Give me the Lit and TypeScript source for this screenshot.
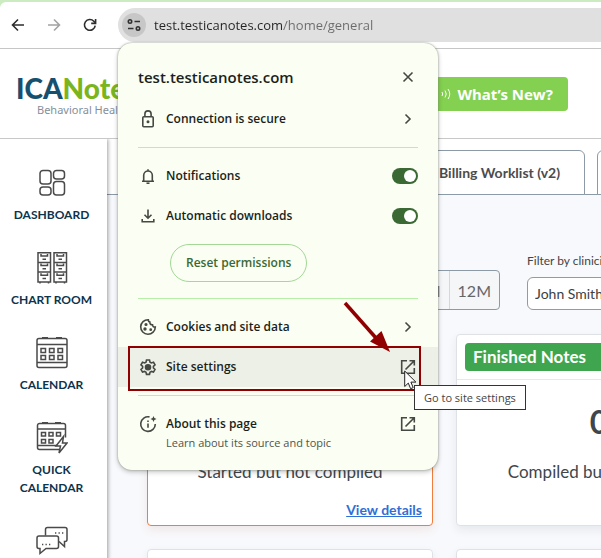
import { LitElement, html, css, svg } from "lit";
import { customElement, state } from "lit/decorators.js";

const icons = {
  back: svg`<path d="M14 8H3M8 2.500 2.500 8 8 13.500" />`,
  reload: svg`<path d="M13.200 8.600A5.400 5.400 0 1 1 11.800 4.200L13.500 6" /><path d="M13.600 2v4.400H9.200" />`,
  tune: svg`<circle cx="4" cy="4.500" r="1.700" /><path d="M8.500 4.500h5.500M2 11.500h5.500" /><circle cx="12" cy="11.500" r="1.700" />`,
  lock: svg`<rect x="4.800" y="7.800" width="10.400" height="9.900" rx="1" /><path d="M6.900 7.500V5a3.100 3.100 0 0 1 6.200 0v2.500" /><circle cx="10" cy="12.700" r=".7" fill="currentColor" />`,
  bell: svg`<path d="M4 15.200h12M5.700 15V9.300a4.300 4.300 0 0 1 8.600 0V15M10 4.700V3.200" /><path d="M8.500 17.200h3" />`,
  download: svg`<path d="M10 3.500v8.300M6.500 8.700 10 12.200l3.500-3.500M4.200 13v2.800h11.600V13" />`,
  cookie: svg`<path d="M10.300 2.700A7.300 7.300 0 1 0 17.300 10c-1.700.2-2.800-.7-2.800-2.200-1.900.1-2.800-1-2.600-2.700-1.200-.3-1.700-1.200-1.600-2.400Z" /><circle cx="8" cy="7.500" r=".8" fill="currentColor" /><circle cx="7" cy="12" r=".9" fill="currentColor" /><circle cx="12.700" cy="12.700" r=".6" fill="currentColor" />`,
  gear: svg`<path d="M8.500 3h3l.5 2.200 1.400.8 2.100-.7 1.500 2.600-1.600 1.500v1.600l1.600 1.500-1.500 2.600-2.100-.7-1.400.8-.5 2.200h-3L8 15.200l-1.400-.8-2.100.7L3 12.500 4.600 11V9.400L3 7.900l1.500-2.600 2.100.7L8 5.200Z" /><circle cx="10" cy="10.200" r="2.500" fill="currentColor" />`,
  info: svg`<path d="M11.500 2.900A7.300 7.300 0 1 0 17.300 10" /><path d="M10 9.500v4.300M10 6.500v1.400" /><path d="m15.500 2 .9 2.100 2.100.9-2.100.9-.9 2.100-.9-2.100-2.100-.9 2.100-.9Z" fill="currentColor" stroke="none" />`,
  open: svg`<path d="M9 3.700H3.700v12.600h12.600V11M11.500 3.700h4.800v4.800M16 4 7.500 12.500" />`,
  chevron: svg`<path d="m7.500 5.500 4.500 4.500-4.500 4.500" />`,
  close: svg`<path d="m5.500 5.500 9 9m0-9-9 9" />`,
  dashboard: svg`<rect x="4" y="3.500" width="11" height="13.500" rx="3" /><rect x="17.500" y="3.500" width="11" height="8.500" rx="3" /><rect x="4" y="20" width="11" height="8" rx="3" /><rect x="17.500" y="14.500" width="11" height="13.500" rx="3" />`,
  cabinet: svg`${[2, 18].map(
    (x) => svg`<path d="M${x} .8h12.500v29.200h-12.500zM${x} 10.400h12.500M${x} 20h12.500M${x + 2} 30v1.500M${x + 10.5} 30v1.500" />${[0, 9.6, 19.2].map(
      (y) => svg`<path d="M${x + 3} ${2 + y}v2h6.500v-2M${x + 4.5} ${7.2 + y}h3.500" />`,
    )}`,
  )}`,
  calendar: svg`<rect x="1" y="1.500" width="30" height="29" rx="2" /><path d="M1 7.500h30M1 25.500h30M6 .7h6M20 .7h6" />${[5, 13.5, 22].map(
    (x) => svg`<rect x="${x}" y="11.500" width="4.500" height="4" /><rect x="${x}" y="18.500" width="4.500" height="4" />`,
  )}`,
  quick: svg`<path d="M24 27.500H3.500a2 2 0 0 1-2-2v-22a2 2 0 0 1 2-2h24a2 2 0 0 1 2 2v12M1.500 7h28M1.500 23.500h20M6 .7h6M19 .7h6" />${[5.5, 13, 20.5].map(
    (x) => svg`<rect x="${x}" y="10.500" width="4" height="3.500" />`,
  )}<rect x="5.500" y="17.500" width="4" height="3.500" /><rect x="13" y="17.500" width="4" height="3.500" /><path d="M27.500 14.500 20 24h4.500l-1.500 7 8-10h-4.500Z" fill="#fff" />`,
  chat: svg`<path d="M9.500 10.500v-6a2 2 0 0 1 2-2H29a2 2 0 0 1 2 2v10a2 2 0 0 1-2 2h-.5v5l-5.500-5" /><path d="M3 11h17.500a2 2 0 0 1 2 2v8.500a2 2 0 0 1-2 2H10l-6 5v-5H3a2 2 0 0 1-2-2V13a2 2 0 0 1 2-2Z" /><path d="M6 19.500h1.300M9.500 19.500h1.300M13 19.500h1.300M19 8h1.300M22.500 8h1.300M26 8h1.300" />`,
};

const icon = (name: keyof typeof icons, size = 20) =>
  html`<svg class="icon i${size}" viewBox="0 0 ${size} ${size}" aria-hidden="true">${icons[name]}</svg>`;

@customElement("browser-toolbar")
export class BrowserToolbar extends LitElement {
  static styles = css`
    :host { display: flex; align-items: center; gap: 20px; padding: 6px 0 6px 10px; background: #fff; border-bottom: 1px solid #c6c6c6; border-top-left-radius: 6px; }
    .icon { display: block; fill: none; stroke: currentColor; stroke-width: 1.6; flex: none; }
    .i16 { width: 16px; height: 16px; }
    .nav { border: 0; background: none; padding: 0; color: #2d2d2d; }
    .nav:disabled { color: #a3a3a3; }
    .forward .icon { transform: scaleX(-1); }
    .address { flex: 1; display: flex; align-items: center; gap: 8px; height: 34px; padding-left: 4px; background: #e0e0e0; border-radius: 17px 0 0 17px; }
    .site { width: 24px; height: 24px; border: 0; border-radius: 50%; padding: 4px; background: #c7c7c7; color: #303030; }
    .url { flex: 1; min-width: 0; border: 0; padding: 0; height: 24px; font: 13px "Open Sans", sans-serif; color: transparent; background: linear-gradient(90deg, #242424 129px, #6b6b6b 129px); -webkit-background-clip: text; background-clip: text; outline: 0; }
  `;
  render() {
    return html`
      <button class="nav" aria-label="Back">${icon("back", 16)}</button>
      <button class="nav forward" aria-label="Forward" disabled>${icon("back", 16)}</button>
      <button class="nav" aria-label="Reload">${icon("reload", 16)}</button>
      <div class="address">
        <button class="site" aria-label="View site information">${icon("tune", 16)}</button>
        <input class="url" aria-label="Address" .value=${"test.testicanotes.com/home/general"} />
      </div>
    `;
  }
}

@customElement("site-info")
export class SiteInfo extends LitElement {
  @state() private permissions = [
    { icon: "bell" as const, label: "Notifications", on: true },
    { icon: "download" as const, label: "Automatic downloads", on: true },
  ];
  static styles = css`
    :host { display: block; background: #fafef3; border-radius: 14px; box-shadow: 0 0 2px #8b9282, 0 2px 5px #0000003d; font: 600 12px/20px "Open Sans", sans-serif; color: #1c1e1a; }
    .icon { display: block; width: 20px; height: 20px; fill: none; stroke: currentColor; stroke-width: 1.6; flex: none; color: #454943; }
    .head { display: flex; align-items: center; justify-content: space-between; height: 44px; padding: 12px 20px 0; }
    h2 { margin: 0; font-size: 15px; font-weight: 600; }
    button { font: inherit; color: inherit; }
    .close { border: 0; padding: 0; background: none; }
    .row { box-sizing: border-box; width: 100%; min-height: 40px; display: flex; align-items: center; gap: 8px; padding: 0 20px; border: 0; background: none; text-align: left; }
    .text { flex: 1; }
    .active { background: #edf0e6; }
    .line { height: 1px; margin: 8px 20px; border: 0; background: #b6efa7; }
    .switch { appearance: none; box-sizing: border-box; margin: 0; width: 26px; height: 16px; padding: 2px; border-radius: 8px; background: #969c92; }
    .switch::before { content: ""; display: block; width: 12px; height: 12px; border-radius: 50%; background: #fff; }
    .switch:checked { background: #3b6933; }
    .switch:checked::before { margin-left: 10px; }
    .reset { display: block; height: 38px; margin: 8px 52px 16px; padding: 0 15px; border: 1px solid #a3d896; border-radius: 19px; background: none; color: #3b6933; }
    .about { padding-top: 10px; padding-bottom: 18px; align-items: flex-start; }
    .sub { display: block; font-size: 11px; font-weight: 400; line-height: 18px; color: #50544c; }
  `;
  private toggle(index: number) {
    this.permissions = this.permissions.map((p, i) => (i === index ? { ...p, on: !p.on } : p));
  }
  render() {
    return html`
      <header class="head">
        <h2>test.testicanotes.com</h2>
        <button class="close" aria-label="Close">${icon("close")}</button>
      </header>
      <button class="row">${icon("lock")}<span class="text">Connection is secure</span>${icon("chevron")}</button>
      <hr class="line" />
      ${this.permissions.map(
        (p, i) => html`<label class="row">${icon(p.icon)}<span class="text">${p.label}</span><input class="switch" type="checkbox" .checked=${p.on} @change=${() => this.toggle(i)} /></label>`,
      )}
      <button class="reset">Reset permissions</button>
      <hr class="line" />
      <button class="row">${icon("cookie")}<span class="text">Cookies and site data</span>${icon("chevron")}</button>
      <button class="row active">${icon("gear")}<span class="text">Site settings</span>${icon("open")}</button>
      <hr class="line" />
      <button class="row about">${icon("info")}<span class="text">About this page<span class="sub">Learn about its source and topic</span></span>${icon("open")}</button>
    `;
  }
}

@customElement("side-nav")
export class SideNav extends LitElement {
  private items = [
    { icon: "dashboard" as const, label: "DASHBOARD" },
    { icon: "cabinet" as const, label: "CHART ROOM" },
    { icon: "calendar" as const, label: "CALENDAR" },
    { icon: "quick" as const, label: "QUICK CALENDAR" },
    { icon: "chat" as const, label: "" },
  ];
  static styles = css`
    :host { display: flex; flex-direction: column; gap: 28px; padding: 28px 4px 0 0; background: #fff; box-shadow: 1px 0 4px #00000060; clip-path: inset(0 -8px 0 0); }
    .item { display: flex; flex-direction: column; align-items: center; gap: 7px; padding: 0 8px; font: 700 12px/18px Lato, sans-serif; color: #0c344c; text-align: center; text-decoration: none; }
    .icon { display: block; width: 32px; height: 32px; fill: none; stroke: #4a4a4a; stroke-width: 1.5; }
  `;
  render() {
    return this.items.map((i) => html`<a class="item" href="#" aria-label=${i.label || "Messages"}>${icon(i.icon, 32)}<span>${i.label}</span></a>`);
  }
}

@customElement("app-root")
export class AppRoot extends LitElement {
  static styles = css`
    :host { display: flex; flex-direction: column; position: relative; height: 100vh; box-sizing: border-box; padding-top: 2px; overflow: hidden; background: #cdebc0; font-family: Lato, sans-serif; color: #40464c; }
    button { font: inherit; color: inherit; }
    .top { display: flex; align-items: center; justify-content: space-between; height: 89px; flex: none; padding: 0 33px 0 16px; background: #fff; border-bottom: 1px solid #c8c8c8; }
    .logo { display: flex; flex-direction: column; padding-top: 2px; color: #17506e; font: 900 28px/30px Lato, sans-serif; }
    .logo b { font-weight: 900; color: #7ab51d; }
    .logo small { padding-left: 21px; font: 11px/14px "Noto Sans", sans-serif; color: #85909a; }
    .news { display: flex; align-items: center; gap: 6px; height: 34px; padding: 0 15px; border: 0; border-radius: 4px; background: #84d050; color: #fff; font: 700 15px "Noto Sans", sans-serif; }
    .wave { width: 12px; height: 12px; fill: none; stroke: #fff; }
    .body { flex: 1; min-height: 0; display: grid; grid-template-columns: 107px minmax(0, 1fr); background: #f8f9fc; }
    .side { z-index: 1; }
    .tabs { display: flex; align-items: flex-end; gap: 12px; height: 55px; padding-left: 307px; background: #fff; border-bottom: 1px solid #8c99a6; }
    .tab { flex: none; box-sizing: border-box; height: 45px; min-width: 170px; margin-bottom: -1px; padding: 0 24px; border: 1px solid #8c99a6; border-radius: 6px 6px 0 0; background: #fff; font-size: 14px; font-weight: 700; color: #4c4c4c; white-space: nowrap; }
    .content { padding: 56px 40px 0; }
    .filters { display: flex; justify-content: flex-end; align-items: flex-end; gap: 27px; margin-right: -136px; }
    .range { display: flex; border: 1px solid #8c99a6; border-radius: 4px; overflow: hidden; background: #f5f6f8; }
    .range button { height: 38px; padding: 0 8px; border: 0; border-left: 1px solid #d4d8dd; background: none; font-size: 16px; color: #666; }
    .field { display: flex; flex-direction: column; gap: 6px; width: 170px; font-size: 12px; line-height: 20px; color: #444; }
    .pick { appearance: none; height: 33px; border: 1px solid #999; border-radius: 6px; padding: 0 7px; background: #fff; font: 14px Lato, sans-serif; color: #404040; }
    .cards { display: grid; grid-template-columns: repeat(2, minmax(286px, 1fr)); gap: 23px; margin-top: 24px; }
    .card { display: flex; flex-direction: column; box-sizing: border-box; height: 192px; border: 1px solid #dee2e6; border-radius: 4px; background: #fff; box-shadow: 0 4px 10px #00205014; text-align: center; }
    .next { height: 60px; }
    .orange { border-color: #ee7d3e; box-shadow: 0 4px 10px #a0401018; }
    .cap { height: 28px; padding: 8px; border-bottom: 1px solid #e6e8eb; }
    .chip { display: block; padding: 0 8px; border-radius: 4px; background: #3fa64f; color: #fff; font-size: 17px; font-weight: 700; line-height: 28px; text-align: left; }
    .count { margin-top: 24px; font-size: 32px; font-weight: 700; line-height: 36px; }
    .note { margin-top: 20px; font-size: 17px; line-height: 24px; white-space: nowrap; }
    .orange .note { margin-top: 125px; }
    .view { margin: 15px 10px 0; font-size: 14px; font-weight: 700; line-height: 22px; text-align: right; color: #2f6fd6; }
    .popup { position: absolute; top: 43px; left: 118px; width: 320px; z-index: 2; }
    .mark { position: absolute; top: 346px; left: 128px; width: 289px; height: 41px; border: 2px solid #900000; z-index: 3; pointer-events: none; }
    .arrow { position: absolute; top: 300px; left: 340px; width: 54px; height: 56px; z-index: 3; }
    .tip { position: absolute; top: 385px; left: 414px; padding: 0 9px; border: 1px solid #333; background: #fff; font: 11px/23px "Open Sans", sans-serif; color: #444; z-index: 4; }
    .cursor { position: absolute; top: 370px; left: 404px; width: 13px; height: 20px; z-index: 5; }
  `;
  render() {
    return html`
      <browser-toolbar></browser-toolbar>
      <header class="top">
        <div class="logo"><span>ICA<b>Notes</b></span><small>Behavioral Health</small></div>
        <button class="news">
          <svg class="wave" viewBox="0 0 12 12" aria-hidden="true"><path d="M2 4q1.500 2 0 4M5 2.500q2.500 3.500 0 7M8 1q3.500 5 0 10" /></svg>
          What’s New?
        </button>
      </header>
      <div class="body">
        <side-nav class="side"></side-nav>
        <main>
          <nav class="tabs">
            <button class="tab">Billing Worklist (v2)</button>
            <button class="tab" aria-label="More"></button>
          </nav>
          <div class="content">
            <div class="filters">
              <div class="range"><button>6M</button><button>12M</button></div>
              <label class="field">Filter by clinician<select class="pick"><option>John Smith</option></select></label>
            </div>
            <div class="cards">
              <section class="card orange">
                <div class="note">Started but not compiled</div>
                <a class="view" href="#">View details</a>
              </section>
              <section class="card">
                <div class="cap"><span class="chip">Finished Notes</span></div>
                <div class="count">0</div>
                <div class="note">Compiled but not signed</div>
              </section>
              <section class="card next"></section>
              <section class="card next"></section>
            </div>
          </div>
        </main>
      </div>
      <site-info class="popup"></site-info>
      <div class="mark"></div>
      <svg class="arrow" viewBox="0 0 54 56" aria-hidden="true"><path d="M5 3 36 38" stroke="#900000" stroke-width="3.500" /><path d="M50 52 30 41.500 41.500 31Z" fill="#900000" /></svg>
      <div class="tip" role="tooltip">Go to site settings</div>
      <svg class="cursor" viewBox="0 0 13 20" aria-hidden="true"><path d="M.7 1v15.500l3.600-3.400 2.300 5.600 2.600-1.100-2.300-5.500h5Z" fill="#fff" stroke="#222" /></svg>
    `;
  }
}
